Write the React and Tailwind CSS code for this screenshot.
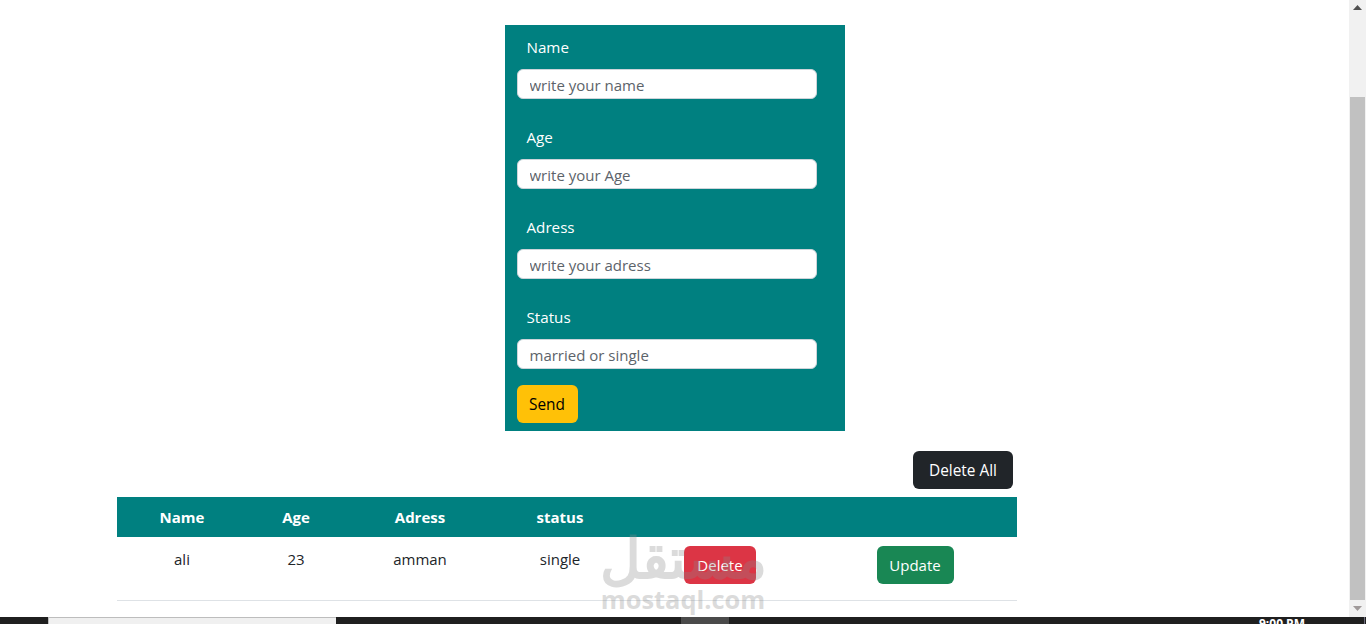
const fields = [
  { label: 'Name', placeholder: 'write your name' },
  { label: 'Age', placeholder: 'write your Age' },
  { label: 'Adress', placeholder: 'write your adress' },
  { label: 'Status', placeholder: 'married or single' },
];

function Field({ label, placeholder }) {
  return (
    <div className="h-[90px] pt-[10px]">
      <label className="block h-[34px] pl-[10px] text-[15.2px] leading-[24px] text-white">{label}</label>
      <input
        type="text"
        placeholder={placeholder}
        className="block h-[30px] w-[300px] rounded-[6px] border border-[#ced4da] bg-white px-3 pt-[2px] text-[15px] text-[#212529] placeholder:text-[#5c636a]"
      />
    </div>
  );
}

function Form() {
  return (
    <form className="mx-auto h-[406px] w-[340px] bg-[#008080] pl-3">
      {fields.map((f) => (
        <Field key={f.label} {...f} />
      ))}
      <button type="button" className="block h-[38px] w-[61px] rounded-[6px] bg-[#ffc107] pt-[1px] text-black">
        Send
      </button>
    </form>
  );
}

function Table() {
  return (
    <table className="ml-[117px] w-[900px] table-fixed border-collapse text-center text-[15px] text-[#212529]">
      <thead>
        <tr className="h-[40px] bg-[#008080] font-bold text-white">
          <th className="w-[130px]">Name</th>
          <th className="w-[98px]">Age</th>
          <th className="w-[150px]">Adress</th>
          <th className="w-[130px]">status</th>
          <th className="w-[190px]"></th>
          <th></th>
        </tr>
      </thead>
      <tbody>
        <tr className="h-[63px] border-b border-[#dee2e6] align-top">
          <td className="pt-[11px]">ali</td>
          <td className="pt-[11px]">23</td>
          <td className="pt-[11px]">amman</td>
          <td className="pt-[11px]">single</td>
          <td className="pt-[9px]">
            <button type="button" className="h-[38px] w-[72px] rounded-[6px] bg-[#dc3545] pt-[1px] text-white">
              Delete
            </button>
          </td>
          <td className="pt-[9px] pr-[2px]">
            <button type="button" className="h-[38px] w-[77px] rounded-[6px] bg-[#198754] pt-[1px] text-white">
              Update
            </button>
          </td>
        </tr>
      </tbody>
    </table>
  );
}

function Scrollbar() {
  return (
    <div className="flex w-[17px] flex-col items-center bg-[#f1f1f1]">
      <svg width="9" height="5" viewBox="0 0 9 5" className="mt-[5px] fill-[#505050]">
        <path d="M4.5 0L9 5H0z" />
      </svg>
      <div className="mt-[87px] h-[503px] w-[15px] shrink-0 bg-[#c1c1c1]" />
      <svg width="9" height="5" viewBox="0 0 9 5" className="mt-[6px] fill-[#a09a9a]">
        <path d="M0 0H9L4.5 5z" />
      </svg>
    </div>
  );
}

function Taskbar() {
  return (
    <div className="flex h-[7px] items-start overflow-hidden bg-[#1f1f1f]">
      <div className="ml-[48px] h-[7px] w-[288px] border-l border-t border-[#bdbdbd] bg-[#f0f0f0]" />
      <div className="ml-[345px] h-[7px] w-[48px] bg-[#4a4a4a]" />
      <div className="ml-[530px] -mt-[1px] text-[12px] leading-[16px] font-bold whitespace-nowrap text-white">
        9:00 PM
      </div>
      <div className="ml-[59px] h-[7px] w-px bg-[#6b6b7b]" />
    </div>
  );
}

export default function App() {
  return (
    <div className="relative flex h-[624px] flex-col overflow-hidden bg-white font-['Open_Sans','Noto_Sans',sans-serif] text-[15.4px]">
      <div className="flex h-[617px] min-h-0">
        <main className="flex-1 pt-[25px]">
          <Form />
          <div className="mt-[20px] ml-[913px]">
            <button type="button" className="h-[38px] w-[100px] rounded-[6px] bg-[#212529] pt-[1px] text-white">
              Delete All
            </button>
          </div>
          <div className="mt-[8px]">
            <Table />
          </div>
        </main>
        <Scrollbar />
      </div>
      <Taskbar />
      {/* mostaql watermark */}
      <div className="pointer-events-none absolute top-[528px] left-[600px] flex w-[166px] flex-col items-center text-[#8a8a8a] opacity-30">
        <span className="font-['Noto_Sans','Open_Sans',sans-serif] text-[56px] leading-[57px] font-bold" dir="rtl">
          مستقل
        </span>
        <span className="text-[25.4px] leading-[28px] font-bold">mostaql.com</span>
      </div>
    </div>
  );
}
